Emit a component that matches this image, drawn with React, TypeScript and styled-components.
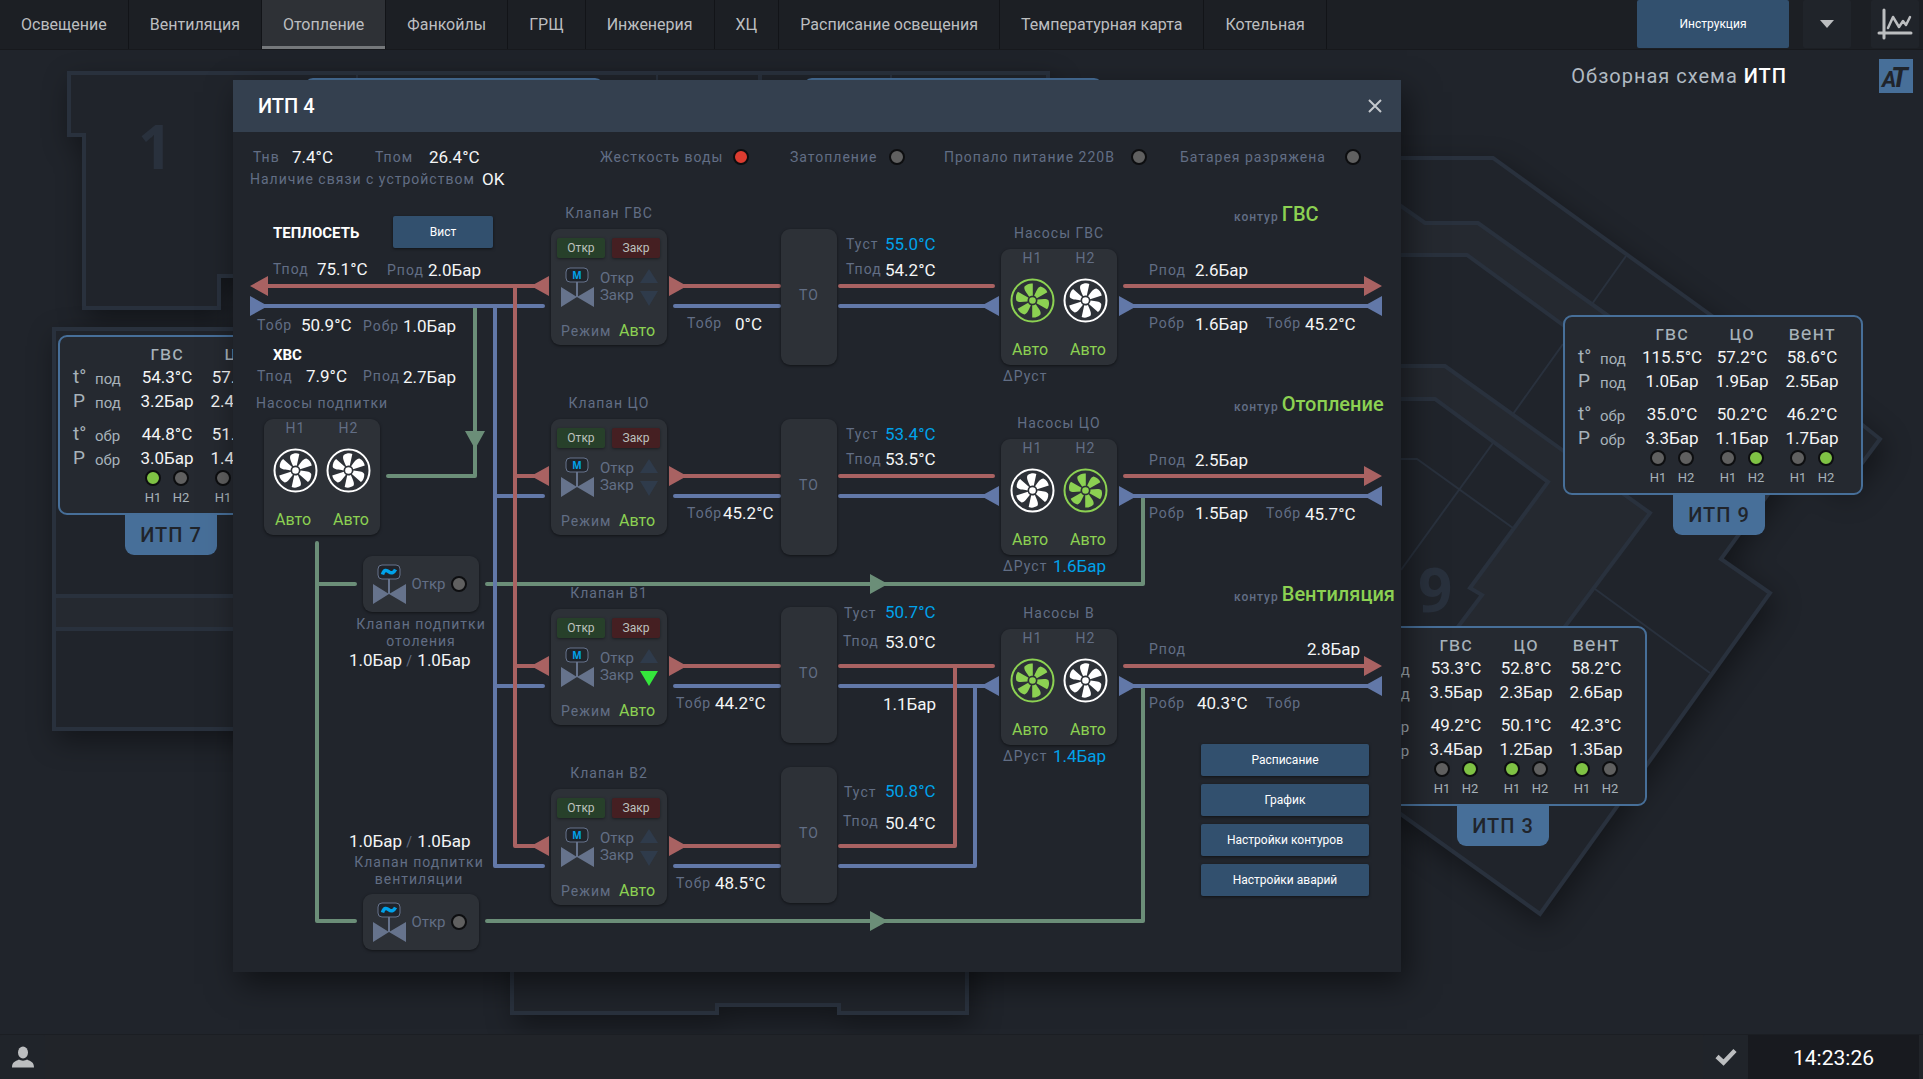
import React from 'react';
import styled, { createGlobalStyle, css } from 'styled-components';

const color = {
  page: '#20242b',
  panel: '#252930',
  line: '#29313d',
  modal: '#21252c',
  header: '#34404f',
  card: '#2d3137',
  button: '#32506e',
  label: '#626e85',
  value: '#f4f5f6',
  set: '#00a2ea',
  lime: '#8cd152',
  red: '#a96262',
  blue: '#6278a8',
  green: '#6b8e78',
  valve: '#66738c',
  frame: '#476f99',
};

const GlobalStyle = createGlobalStyle`
  *, *::before, *::after { box-sizing: border-box; }
  body {
    margin: 0;
    background: ${color.page};
    font-family: Roboto, 'Noto Sans', sans-serif;
    font-size: 16px;
  }
  button { font-family: inherit; border: 0; padding: 0; cursor: pointer; }
`;

/* ---------- page frame ---------- */

const Page = styled.div`
  display: flex;
  flex-direction: column;
  min-height: 100vh;
`;

const TopBar = styled.header`
  display: flex;
  justify-content: space-between;
  height: 50px;
  background: #1c1f24;
  border-bottom: 1px solid #17191d;
`;

const Nav = styled.nav`
  display: flex;
`;

const NavLink = styled.a<{ $active?: boolean }>`
  display: flex;
  align-items: center;
  padding: 0 21px;
  border-right: 1px solid #121418;
  color: #bcbec0;
  font-size: 16px;
  text-decoration: none;
  white-space: nowrap;
  ${p => p.$active && css`
    background: #2e3136;
    box-shadow: inset 0 -3px 0 #75787b;
  `}
`;

const TopActions = styled.div`
  display: flex;
  gap: 20px;
  padding-right: 4px;
`;

const GuideButton = styled.button`
  width: 152px;
  height: 48px;
  margin-right: -6px;
  border-radius: 2px;
  background: ${color.button};
  color: #fff;
  font-size: 12px;
`;

const BarButton = styled.button`
  display: flex;
  align-items: center;
  justify-content: center;
  width: 48px;
  height: 48px;
  border-radius: 2px;
  background: #20242a;
  color: #bcbec0;
`;

const Stage = styled.main`
  position: relative;
  flex: 1;
  overflow: hidden;
`;

const BottomBar = styled.footer`
  display: flex;
  align-items: stretch;
  height: 45px;
  padding-right: 4px;
  background: #212429;
  border-top: 1px solid #1b1e23;
`;

const UserButton = styled(BarButton)`
  width: 45px;
  height: 44px;
  margin-right: auto;
`;

const CheckButton = styled(BarButton)`
  width: 45px;
  height: 44px;
`;

const Clock = styled.time`
  width: 171px;
  background: #181a1f;
  color: #fff;
  font-size: 21px;
  line-height: 46px;
  text-align: center;
`;

const SceneHead = styled.div`
  display: flex;
  justify-content: flex-end;
  align-items: center;
  gap: 92px;
  padding: 9px 10px 0 0;
`;

const SceneTitle = styled.h1`
  margin: 0;
  color: #b0bac2;
  font-size: 20px;
  font-weight: 400;
  letter-spacing: 1px;
  b { color: #fff; font-weight: 500; }
`;

/* ---------- building plan ---------- */

const PlanSvg = styled.svg`
  position: absolute;
  left: 0;
  top: 0;
  width: 1923px;
  height: 984px;
  .shape { filter: drop-shadow(4px 10px 14px rgba(0, 0, 0, 0.4)); }
`;

const Plan = () => (
  <PlanSvg viewBox="0 50 1923 984" fill="none" stroke={color.line} strokeWidth="4" aria-hidden="true">
    <path className="shape" fill={color.page} d="M69 73H1048V276H219V308H84V135H69Z" />
    <path strokeWidth="2" d="M357 73V90M657 73V90M891 73V90" />
    <path d="M760 73V90" />
    <path className="shape" fill={color.page} d="M54 329H700V729H54Z" />
    <path fill={color.panel} d="M54 596H700V629H54Z" />
    <path className="shape" fill={color.page} d="M512 900V1013H717V1005H839V1013H967V900Z" />
    <path
      className="shape"
      fill={color.page}
      d="M1300 158H1493L1798 378L1850 415L1880 439L1845 486L1798 453L1721 559L1770 593L1540 914L1300 742Z"
    />
    <path fill={color.panel} d="M1300 135L1425 223H1478L1607 315L1720 396L1650 388L1563 325L1467 255H1300" />
    <path fill={color.panel} d="M1300 366H1445L1650 513L1540 660H1433L1482 595L1470 588L1548 482L1435 399H1300" />
    <path strokeWidth="2" d="M1626 256L1592 304M1563 344L1513 414M1493 443L1401 570M1401 459H1417L1513 528M1595 589L1710 673" />
    <g stroke="none" fill={color.line} fontFamily="'Open Sans', sans-serif" fontWeight="700" fontSize="60">
      <text x="138" y="169">1</text>
      <text x="1418" y="612">9</text>
    </g>
  </PlanSvg>
);

/* ---------- overview plates ---------- */

const Led = styled.span<{ $state?: 'on' | 'off' | 'alarm' }>`
  display: inline-block;
  flex: none;
  width: 16px;
  height: 16px;
  border: 2px solid #0d0e10;
  border-radius: 50%;
  background: ${p => (p.$state === 'on' ? '#7fc244' : p.$state === 'alarm' ? '#dc3c30' : '#606060')};
`;

const PlateBox = styled.section<{ $x: number; $y: number }>`
  position: absolute;
  left: ${p => p.$x}px;
  top: ${p => p.$y}px;
  width: 300px;
  height: 180px;
  padding-top: 4px;
  border: 2px solid ${color.frame};
  border-radius: 9px;
  background: ${color.panel};
`;

const PlateTab = styled.h2<{ $x: number }>`
  position: absolute;
  left: ${p => p.$x}px;
  top: 100%;
  width: 92px;
  height: 42px;
  margin: 0;
  border-radius: 0 0 9px 9px;
  background: ${color.frame};
  color: ${color.page};
  font-size: 20px;
  font-weight: 500;
  letter-spacing: 1px;
  line-height: 44px;
  text-align: center;
`;

const PlateTable = styled.table`
  width: 282px;
  table-layout: fixed;
  border-collapse: collapse;
  color: ${color.value};
  font-size: 17px;
  col:first-child { width: 35px; }
  col:nth-child(2) { width: 37px; }
  tr { height: 24px; }
  td, th { padding: 0; font-weight: 400; text-align: center; white-space: nowrap; line-height: 20px; }
  thead th { color: #a7b2ba; font-size: 20px; letter-spacing: 1px; }
  tbody th { color: #a7b2ba; font-size: 19px; text-align: left; }
  tbody th:first-child { padding-left: 13px; }
  tbody th + th { font-size: 15px; vertical-align: bottom; }
  tr.gap { height: 33px; }
  tr.gap td, tr.gap th { padding-bottom: 9px; }
`;

const PumpPair = styled.div`
  display: flex;
  justify-content: center;
`;

const PumpMark = styled.span`
  display: flex;
  flex-direction: column;
  align-items: center;
  gap: 4px;
  width: 28px;
  color: #a7b2ba;
  font-size: 13px;
  line-height: 16px;
`;

type PlateData = { name: string; x: number; y: number; tab: number; rows: string[][]; pumps: string[] };

const plates: PlateData[] = [
  {
    name: 'ИТП 7', x: 58, y: 285, tab: 65,
    rows: [['54.3°C', '57.1°C', '58.0°C'], ['3.2Бар', '2.4Бар', '2.5Бар'], ['44.8°C', '51.2°C', '46.0°C'], ['3.0Бар', '1.4Бар', '1.7Бар']],
    pumps: ['10', '00', '10'],
  },
  {
    name: 'ИТП 9', x: 1563, y: 265, tab: 108,
    rows: [['115.5°C', '57.2°C', '58.6°C'], ['1.0Бар', '1.9Бар', '2.5Бар'], ['35.0°C', '50.2°C', '46.2°C'], ['3.3Бар', '1.1Бар', '1.7Бар']],
    pumps: ['00', '01', '01'],
  },
  {
    name: 'ИТП 3', x: 1347, y: 576, tab: 108,
    rows: [['53.3°C', '52.8°C', '58.2°C'], ['3.5Бар', '2.3Бар', '2.6Бар'], ['49.2°C', '50.1°C', '42.3°C'], ['3.4Бар', '1.2Бар', '1.3Бар']],
    pumps: ['01', '10', '10'],
  },
];

const rowHeads = [['t°', 'под'], ['P', 'под'], ['t°', 'обр'], ['P', 'обр']];

const Plate = ({ data }: { data: PlateData }) => (
  <PlateBox $x={data.x} $y={data.y}>
    <PlateTable>
      <colgroup><col /><col /><col /><col /><col /></colgroup>
      <thead>
        <tr><th /><th /><th>гвс</th><th>цо</th><th>вент</th></tr>
      </thead>
      <tbody>
        {data.rows.map((row, i) => (
          <tr key={i} className={i === 1 ? 'gap' : undefined}>
            <th>{rowHeads[i][0]}</th>
            <th>{rowHeads[i][1]}</th>
            {row.map((v, j) => <td key={j}>{v}</td>)}
          </tr>
        ))}
        <tr>
          <td /><td />
          {data.pumps.map((pair, i) => (
            <td key={i}>
              <PumpPair>
                {[...pair].map((s, j) => (
                  <PumpMark key={j}><Led $state={s === '1' ? 'on' : 'off'} />Н{j + 1}</PumpMark>
                ))}
              </PumpPair>
            </td>
          ))}
        </tr>
      </tbody>
    </PlateTable>
    <PlateTab $x={data.tab}>{data.name}</PlateTab>
  </PlateBox>
);

/* ---------- modal ---------- */

const Modal = styled.section`
  position: absolute;
  left: 233px;
  top: 30px;
  width: 1168px;
  background: ${color.modal};
  box-shadow: 6px 12px 30px rgba(0, 0, 0, 0.5);
`;

const ModalHead = styled.header`
  display: flex;
  align-items: center;
  justify-content: space-between;
  height: 52px;
  padding: 0 18px 0 25px;
  background: ${color.header};
`;

const ModalTitle = styled.h2`
  margin: 0;
  color: #fff;
  font-size: 20px;
  font-weight: 500;
`;

const CloseButton = styled.button`
  display: flex;
  background: none;
  color: #c4c8cd;
`;

const ModalBody = styled.div`
  position: relative;
  height: 840px;
  padding-top: 14px;
`;

const StatusRow = styled.div<{ $inset: number }>`
  display: flex;
  align-items: center;
  height: 22px;
  padding-left: ${p => p.$inset}px;
`;

const Label = styled.span<{ $width?: number }>`
  width: ${p => (p.$width ? `${p.$width}px` : 'auto')};
  color: ${color.label};
  font-size: 14px;
  letter-spacing: 1px;
  line-height: 20px;
  white-space: nowrap;
`;

const Value = styled.span<{ $width?: number; $set?: boolean }>`
  width: ${p => (p.$width ? `${p.$width}px` : 'auto')};
  color: ${p => (p.$set ? color.set : color.value)};
  font-size: 17px;
  line-height: 20px;
  white-space: nowrap;
`;

const Indicator = styled.span<{ $width: number; $after?: number }>`
  display: flex;
  align-items: center;
  justify-content: space-between;
  width: ${p => p.$width}px;
  margin-right: ${p => p.$after ?? 0}px;
`;

const PipesSvg = styled.svg`
  position: absolute;
  left: 0;
  top: 0;
  width: 1168px;
  height: 840px;
`;

const Place = styled.div<{ $x: number; $y: number; $w?: number }>`
  position: absolute;
  left: ${p => p.$x}px;
  top: ${p => p.$y}px;
  width: ${p => (p.$w ? `${p.$w}px` : 'auto')};
`;

const arrow = (x: number, y: number, dir: 'l' | 'r' | 'd') =>
  dir === 'r' ? `M${x} ${y - 10}L${x + 18} ${y}L${x} ${y + 10}Z`
    : dir === 'l' ? `M${x} ${y - 10}L${x - 18} ${y}L${x} ${y + 10}Z`
      : `M${x - 10} ${y}L${x} ${y + 18}L${x + 10} ${y}Z`;

const Pipe = ({ tone, d, arrows }: { tone: string; d: string; arrows: string[] }) => (
  <g>
    <path d={d} fill="none" stroke={tone} strokeWidth="4" strokeLinecap="round" strokeLinejoin="round" />
    <path d={arrows.join('')} fill={tone} />
  </g>
);

const rows = [0, 190, 380];
const valveRows = [0, 190, 380, 560];

const Pipes = () => (
  <PipesSvg viewBox="0 0 1168 840" aria-hidden="true">
    <Pipe
      tone={color.green}
      d="M242 174V344H155M84 411V789H122M84 452H122M254 452H910V364M254 789H910V554"
      arrows={[arrow(242, 299, 'd'), arrow(637, 452, 'r'), arrow(637, 789, 'r')]}
    />
    <Pipe
      tone={color.blue}
      d={`M20 174H310M262 174V734H310M262 364H310M262 554H310M607 734H742V554${valveRows.map(r => `M442 ${174 + r}H546`).join('')}${rows.map(r => `M607 ${174 + r}H755M890 ${174 + r}H1140`).join('')}`}
      arrows={[arrow(17, 174, 'r'), ...rows.flatMap(r => [arrow(766, 174 + r, 'l'), arrow(886, 174 + r, 'r'), arrow(1149, 174 + r, 'l')])]}
    />
    <Pipe
      tone={color.red}
      d={`M30 154H310M282 154V714H310M282 344H310M282 534H310M607 714H722V534${valveRows.map(r => `M440 ${154 + r}H546`).join('')}${rows.map(r => `M607 ${154 + r}H760M892 ${154 + r}H1140`).join('')}`}
      arrows={[
        arrow(35, 154, 'l'),
        ...valveRows.flatMap(r => [arrow(316, 154 + r, 'l'), arrow(436, 154 + r, 'r')]),
        ...rows.map(r => arrow(1131, 154 + r, 'r')),
      ]}
    />
  </PipesSvg>
);

const Card = styled.div<{ $h: number }>`
  height: ${p => p.$h}px;
  border-radius: 9px;
  background: ${color.card};
  box-shadow: 0 1px 3px rgba(0, 0, 0, 0.5);
`;

const Group = styled.div`
  display: flex;
  flex-direction: column;
  gap: 6px;
  > ${Label} { align-self: center; }
`;

const ValveCard = styled(Card)`
  display: flex;
  flex-direction: column;
  justify-content: space-between;
  padding: 9px 7px 4px 6px;
`;

const CommandRow = styled.div`
  display: flex;
  justify-content: space-between;
`;

const Command = styled.button<{ $kind: 'open' | 'close' }>`
  width: 48px;
  height: 20px;
  border-radius: 2px;
  background: ${p => (p.$kind === 'open' ? '#27402a' : '#451f22')};
  box-shadow: 0 1px 3px rgba(0, 0, 0, 0.4);
  color: #bdc2bf;
  font-size: 12px;
`;

const ValveState = styled.div`
  display: grid;
  grid-template-columns: 34px auto 18px;
  justify-content: space-between;
  align-items: center;
  margin-bottom: 6px;
  padding: 0 2px 0 3px;
`;

const StateLabels = styled.div`
  display: grid;
  justify-items: start;
  line-height: 17px;
  color: ${color.label};
  font-size: 15px;
`;

const ModeRow = styled.div`
  display: flex;
  justify-content: space-between;
  padding: 0 5px 0 4px;
`;

const Mode = styled.span`
  color: ${color.lime};
  font-size: 16px;
  line-height: 20px;
`;

const ValveIcon = ({ sign }: { sign: 'M' | '~' }) => (
  <svg width="34" height="40" viewBox="0 0 34 40" aria-hidden="true">
    <rect x="6" y="1" width="22" height="14" rx="4" fill={color.page} stroke={color.valve} />
    <path d="M17 15V30" stroke={color.valve} strokeWidth="2" />
    <path d="M1 20L17 30L1 40ZM34 20L17 30L34 40Z" fill={color.valve} />
    {sign === 'M' ? (
      <text x="17" y="12" textAnchor="middle" fontSize="10" fontWeight="700" fontFamily="'Open Sans', sans-serif" fill={color.set}>M</text>
    ) : (
      <path d="M10.500 10.500C12 5.500 14.500 5.800 17 7.800S22 8.500 23.500 5.500" fill="none" stroke={color.set} strokeWidth="3.500" />
    )}
  </svg>
);

const Travel = ({ closing }: { closing?: boolean }) => (
  <svg width="18" height="38" viewBox="0 0 18 38" aria-hidden="true">
    <path d="M9 1L18 15H0Z" fill="#2f3b4b" />
    <path d="M9 38L18 23H0Z" fill={closing ? '#35e63c' : '#2f3b4b'} />
  </svg>
);

const Valve = ({ name, y, closing }: { name: string; y: number; closing?: boolean }) => (
  <Place $x={318} $y={y} $w={116}>
    <Group>
      <Label>{name}</Label>
      <ValveCard $h={116}>
        <CommandRow>
          <Command $kind="open">Откр</Command>
          <Command $kind="close">Закр</Command>
        </CommandRow>
        <ValveState>
          <ValveIcon sign="M" />
          <StateLabels><span>Откр</span><span>Закр</span></StateLabels>
          <Travel closing={closing} />
        </ValveState>
        <ModeRow><Label>Режим</Label><Mode>Авто</Mode></ModeRow>
      </ValveCard>
    </Group>
  </Place>
);

const Fan = ({ on }: { on: boolean }) => {
  const tone = on ? color.lime : '#ffffff';
  return (
    <svg width="45" height="45" viewBox="-22.500 -22.500 45 45" role="img" aria-label={on ? 'Включен' : 'Выключен'}>
      <circle r="21" fill="none" stroke={tone} strokeWidth="2" />
      <circle r="3.300" fill={tone} />
      <g fill={tone} transform={on ? undefined : 'rotate(12)'}>
        {[0, 60, 120, 180, 240, 300].map(a => (
          <path key={a} transform={`rotate(${a})`} d="M0.300 -4.800V-17C-2.500 -17.400 -5.500 -16.600 -8 -14C-9 -11 -6 -8 -3.300 -3.800C-1.800 -4.800 -0.800 -5 0.300 -4.800Z" />
        ))}
      </g>
    </svg>
  );
};

const PumpCard = styled(Card)`
  display: grid;
  grid-template-columns: 53px 53px;
  grid-template-rows: 18px 1fr 32px;
  justify-content: center;
  justify-items: center;
  align-items: center;
`;

const ModePair = styled.div`
  display: flex;
  grid-column: 1 / -1;
  gap: 22px;
  padding-top: 2px;
`;

const Pumps = ({ name, x, y, on }: { name: string; x: number; y: number; on: boolean[] }) => (
  <Place $x={x} $y={y} $w={116}>
    <Group>
      <Label>{name}</Label>
      <PumpCard $h={116}>
        <Label>Н1</Label><Label>Н2</Label>
        <Fan on={on[0]} /><Fan on={on[1]} />
        <ModePair><Mode>Авто</Mode><Mode>Авто</Mode></ModePair>
      </PumpCard>
    </Group>
  </Place>
);

const Exchanger = styled(Card)`
  color: ${color.label};
  font-size: 14px;
  letter-spacing: 1px;
  line-height: 132px;
  text-align: center;
`;

const FeedCard = styled(Card)`
  display: flex;
  align-items: center;
  justify-content: space-between;
  padding: 0 12px 0 9px;
`;

const FeedLabel = styled.p`
  margin: 0;
  color: ${color.label};
  font-size: 14px;
  letter-spacing: 1px;
  line-height: 17px;
  text-align: center;
  white-space: pre-line;
`;

const FeedValve = ({ y }: { y: number }) => (
  <Place $x={130} $y={y} $w={116}>
    <FeedCard $h={56}>
      <ValveIcon sign="~" />
      <StateLabels>Откр</StateLabels>
      <Led />
    </FeedCard>
  </Place>
);

const Source = styled.h3`
  margin: 0;
  color: #fff;
  font-size: 15px;
  font-weight: 700;
  line-height: 20px;
`;

const Circuit = styled.h3`
  display: flex;
  align-items: baseline;
  gap: 3px;
  margin: 0;
  color: ${color.lime};
  font-size: 20px;
  font-weight: 500;
  line-height: 24px;
  white-space: nowrap;
  small { color: ${color.label}; font-size: 12px; letter-spacing: 1px; }
`;

const ActionButton = styled.button`
  width: 100%;
  height: 32px;
  border-radius: 2px;
  background: ${color.button};
  box-shadow: 0 1px 3px rgba(0, 0, 0, 0.5);
  color: #fff;
  font-size: 12px;
`;

const ActionList = styled.div`
  display: grid;
  gap: 8px;
`;

/* x of the text, y of its middle line, text, kind */
type Note = [number, number, string, 'label' | 'value' | 'set'];

const notes: Note[] = [
  [40, 137, 'Тпод', 'label'], [84, 137, '75.1°C', 'value'], [154, 138, 'Рпод', 'label'], [195, 138, '2.0Бар', 'value'],
  [24, 193, 'Тобр', 'label'], [68, 193, '50.9°C', 'value'], [130, 194, 'Робр', 'label'], [170, 194, '1.0Бар', 'value'],
  [24, 244, 'Тпод', 'label'], [73, 244, '7.9°C', 'value'], [130, 244, 'Рпод', 'label'], [170, 245, '2.7Бар', 'value'],
  [454, 191, 'Тобр', 'label'], [502, 192, '0°C', 'value'],
  [454, 381, 'Тобр', 'label'], [490, 381, '45.2°C', 'value'],
  [443, 571, 'Тобр', 'label'], [482, 571, '44.2°C', 'value'],
  [443, 751, 'Тобр', 'label'], [482, 751, '48.5°C', 'value'],
  [613, 112, 'Туст', 'label'], [652, 112, '55.0°C', 'set'], [613, 137, 'Тпод', 'label'], [652, 138, '54.2°C', 'value'],
  [613, 302, 'Туст', 'label'], [652, 302, '53.4°C', 'set'], [613, 327, 'Тпод', 'label'], [652, 327, '53.5°C', 'value'],
  [611, 481, 'Туст', 'label'], [652, 480, '50.7°C', 'set'], [610, 509, 'Тпод', 'label'], [652, 510, '53.0°C', 'value'],
  [611, 660, 'Туст', 'label'], [652, 659, '50.8°C', 'set'], [610, 689, 'Тпод', 'label'], [652, 691, '50.4°C', 'value'],
  [650, 572, '1.1Бар', 'value'],
  [770, 244, 'ΔРуст', 'label'], [770, 434, 'ΔРуст', 'label'], [820, 434, '1.6Бар', 'set'], [770, 624, 'ΔРуст', 'label'], [820, 624, '1.4Бар', 'set'],
  [916, 138, 'Рпод', 'label'], [962, 138, '2.6Бар', 'value'], [916, 191, 'Робр', 'label'], [962, 192, '1.6Бар', 'value'], [1033, 191, 'Тобр', 'label'], [1072, 192, '45.2°C', 'value'],
  [916, 328, 'Рпод', 'label'], [962, 328, '2.5Бар', 'value'], [916, 381, 'Робр', 'label'], [962, 381, '1.5Бар', 'value'], [1033, 381, 'Тобр', 'label'], [1072, 382, '45.7°C', 'value'],
  [916, 517, 'Рпод', 'label'], [1074, 517, '2.8Бар', 'value'], [916, 571, 'Робр', 'label'], [964, 571, '40.3°C', 'value'], [1033, 571, 'Тобр', 'label'],
];

const navItems = ['Освещение', 'Вентиляция', 'Отопление', 'Фанкойлы', 'ГРЩ', 'Инженерия', 'ХЦ', 'Расписание освещения', 'Температурная карта', 'Котельная'];

const App = () => (
  <Page>
    <GlobalStyle />
    <TopBar>
      <Nav>
        {navItems.map(item => <NavLink key={item} href="#" $active={item === 'Отопление'}>{item}</NavLink>)}
      </Nav>
      <TopActions>
        <GuideButton>Инструкция</GuideButton>
        <BarButton aria-label="Список">
          <svg width="14" height="8" viewBox="0 0 14 8"><path d="M0 0H14L7 8Z" fill="currentColor" /></svg>
        </BarButton>
        <BarButton aria-label="Графики">
          <svg width="36" height="32" viewBox="0 0 36 32" fill="none" stroke="currentColor" strokeWidth="3" strokeLinecap="round" strokeLinejoin="round">
            <path d="M7 2V30M2 25H34" />
            <path d="M11 20L16 9L22 19L26 13L29 17L33 9" strokeWidth="2.500" />
          </svg>
        </BarButton>
      </TopActions>
    </TopBar>

    <Stage>
      <Plan />
      <SceneHead>
        <SceneTitle>Обзорная схема <b>ИТП</b></SceneTitle>
        <svg width="34" height="34" viewBox="0 0 34 34" role="img" aria-label="AT">
          <rect width="34" height="34" fill={color.frame} />
          <g fill={color.page} fontFamily="Roboto, sans-serif" fontStyle="italic" fontWeight="700">
            <text x="3" y="28" fontSize="22">A</text>
            <text x="12" y="28" fontSize="28">T</text>
          </g>
        </svg>
      </SceneHead>
      <PlateBox $x={304} $y={28} />
      <PlateBox $x={803} $y={28} />
      {plates.map(p => <Plate key={p.name} data={p} />)}

      <Modal aria-label="ИТП 4">
        <ModalHead>
          <ModalTitle>ИТП 4</ModalTitle>
          <CloseButton aria-label="Закрыть">
            <svg width="16" height="16" viewBox="0 0 16 16" stroke="currentColor" strokeWidth="2"><path d="M2 2L14 14M14 2L2 14" /></svg>
          </CloseButton>
        </ModalHead>
        <ModalBody>
          <StatusRow $inset={20}>
            <Label $width={39}>Тнв</Label><Value $width={83}>7.4°C</Value>
            <Label $width={54}>Тпом</Label><Value $width={171}>26.4°C</Value>
            <Indicator $width={149} $after={41}><Label>Жесткость воды</Label><Led $state="alarm" /></Indicator>
            <Indicator $width={115} $after={39}><Label>Затопление</Label><Led /></Indicator>
            <Indicator $width={203} $after={33}><Label>Пропало питание 220В</Label><Led /></Indicator>
            <Indicator $width={181}><Label>Батарея разряжена</Label><Led /></Indicator>
          </StatusRow>
          <StatusRow $inset={17}>
            <Label $width={232}>Наличие связи с устройством</Label><Value>OK</Value>
          </StatusRow>

          <Pipes />

          <Place $x={40} $y={91}><Source>ТЕПЛОСЕТЬ</Source></Place>
          <Place $x={40} $y={213}><Source>ХВС</Source></Place>
          <Place $x={160} $y={84} $w={100}><ActionButton>Вист</ActionButton></Place>

          {notes.map(([x, y, text, kind], i) => (
            <Place key={i} $x={x} $y={y - 10}>
              {kind === 'label' ? <Label>{text}</Label> : <Value $set={kind === 'set'}>{text}</Value>}
            </Place>
          ))}

          <Valve name="Клапан ГВС" y={71} />
          <Valve name="Клапан ЦО" y={261} />
          <Valve name="Клапан В1" y={451} closing />
          <Valve name="Клапан В2" y={631} />

          {[97, 287, 475, 635].map(y => (
            <Place key={y} $x={548} $y={y} $w={56}><Exchanger $h={136}>ТО</Exchanger></Place>
          ))}

          <Pumps name="Насосы ГВС" x={768} y={91} on={[true, false]} />
          <Pumps name="Насосы ЦО" x={768} y={281} on={[false, true]} />
          <Pumps name="Насосы В" x={768} y={471} on={[true, false]} />
          <Pumps name="Насосы подпитки" x={31} y={261} on={[false, false]} />

          <FeedValve y={424} />
          <Place $x={118} $y={484} $w={140}><FeedLabel>{'Клапан подпитки\nотоления'}</FeedLabel></Place>
          <Place $x={116} $y={518}><Value>1.0Бар <Label>/</Label> 1.0Бар</Value></Place>
          <Place $x={116} $y={699}><Value>1.0Бар <Label>/</Label> 1.0Бар</Value></Place>
          <Place $x={116} $y={722} $w={140}><FeedLabel>{'Клапан подпитки\nвентиляции'}</FeedLabel></Place>
          <FeedValve y={762} />

          <Place $x={1001} $y={70}><Circuit><small>контур</small>ГВС</Circuit></Place>
          <Place $x={1001} $y={260}><Circuit><small>контур</small>Отопление</Circuit></Place>
          <Place $x={1001} $y={450}><Circuit><small>контур</small>Вентиляция</Circuit></Place>

          <Place $x={968} $y={612} $w={168}>
            <ActionList>
              <ActionButton>Расписание</ActionButton>
              <ActionButton>График</ActionButton>
              <ActionButton>Настройки контуров</ActionButton>
              <ActionButton>Настройки аварий</ActionButton>
            </ActionList>
          </Place>
        </ModalBody>
      </Modal>
    </Stage>

    <BottomBar>
      <UserButton aria-label="Пользователь">
        <svg width="22" height="22" viewBox="0 0 22 22" fill="currentColor">
          <ellipse cx="11" cy="6.500" rx="5" ry="6" />
          <path d="M0 21.500C0 16 3 15.500 7 13.500C9 15 13 15 15 13.500C19 15.500 22 16 22 21.500Z" />
        </svg>
      </UserButton>
      <CheckButton aria-label="Подтвердить">
        <svg width="22" height="18" viewBox="0 0 22 18" fill="none" stroke="currentColor" strokeWidth="4.500"><path d="M2 8.500L8.500 14.500L20 2.500" /></svg>
      </CheckButton>
      <Clock>14:23:26</Clock>
    </BottomBar>
  </Page>
);

export default App;
